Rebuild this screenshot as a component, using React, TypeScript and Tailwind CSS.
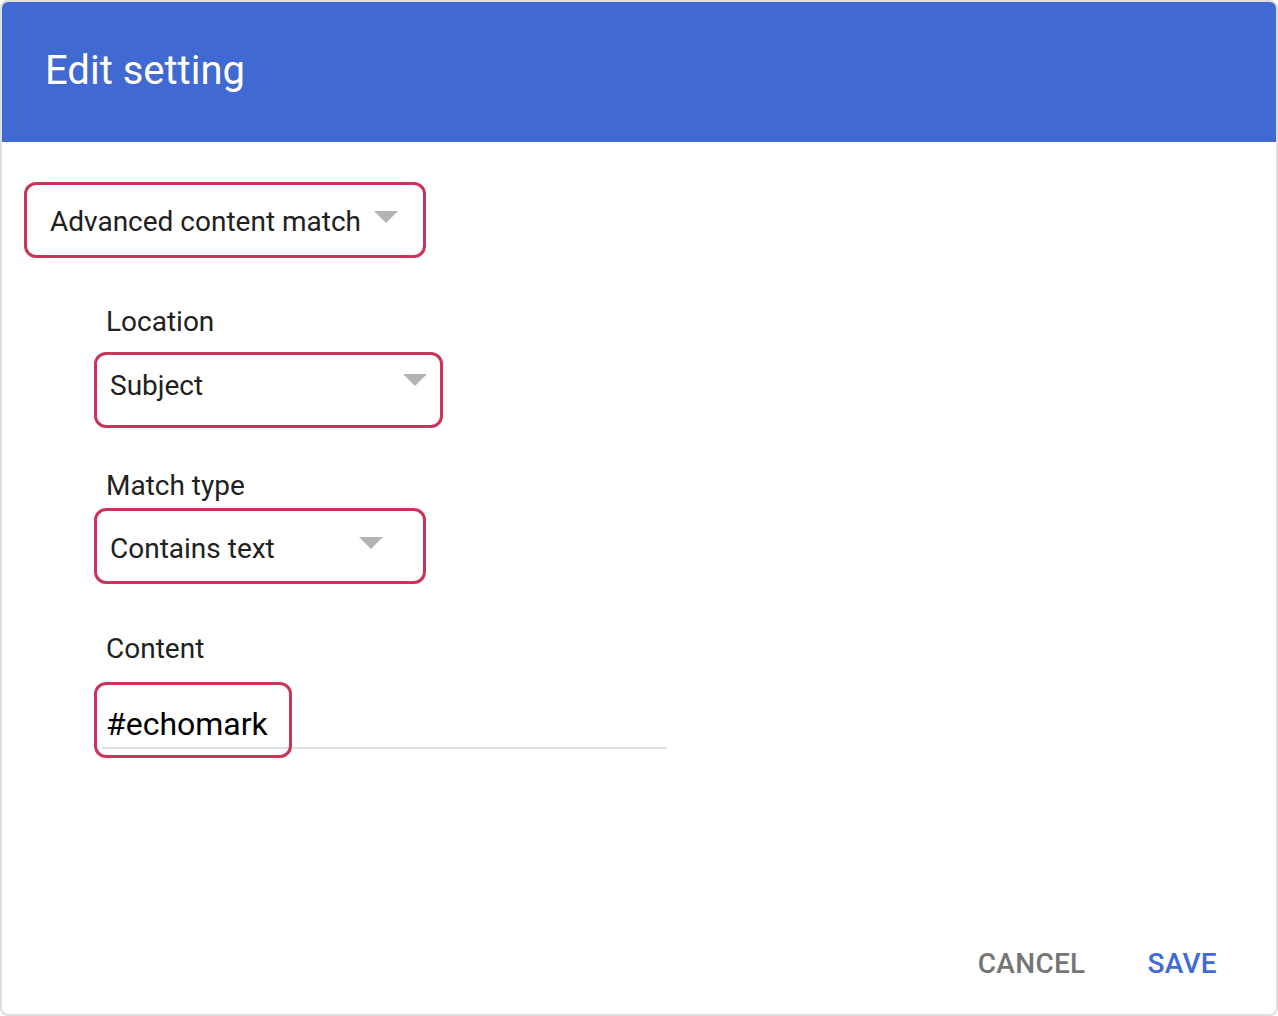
import React from "react";

const font = { fontFamily: "Roboto, 'Noto Sans', Arial, sans-serif" };

function Caret() {
  return (
    <svg width="24" height="12" viewBox="0 0 24 12" className="shrink-0">
      <polygon points="0,0 24,0 12,12" fill="#b3b3b3" />
    </svg>
  );
}

export default function App() {
  return (
    <div
      className="w-[1278px] h-[1016px] border-2 border-[#dedede] rounded-[8px] overflow-hidden flex flex-col bg-white"
      style={font}
    >
      {/* Header */}
      <div className="h-[140px] shrink-0 bg-[#4169d2] pl-[43px] pt-[46px]">
        <h1 className="text-[40px] leading-[46px] text-white font-normal">
          Edit setting
        </h1>
      </div>

      {/* Body */}
      <div className="pl-[22px] pt-[40px]">
        <div className="w-[402px] h-[76px] border-[3px] border-[#cc3358] rounded-[12px] flex items-center pl-[23px] pr-[25px]">
          <span className="text-[28px] leading-[33px] text-[#212121] mt-[3px]">
            Advanced content match
          </span>
          <span className="ml-auto mb-[7px] flex">
            <Caret />
          </span>
        </div>

        <div className="ml-[70px]">
          <div className="mt-[47px] pl-[12px] text-[28px] leading-[33px] text-[#212121]">
            Location
          </div>
          <div className="mt-[14px] w-[349px] h-[76px] border-[3px] border-[#cc3358] rounded-[12px] flex items-center pl-[13px] pr-[13px]">
            <span className="text-[28px] leading-[33px] text-[#212121] mb-[9px]">
              Subject
            </span>
            <span className="ml-auto mb-[21px] flex">
              <Caret />
            </span>
          </div>

          <div className="mt-[41px] pl-[12px] text-[28px] leading-[33px] text-[#212121]">
            Match type
          </div>
          <div className="mt-[6px] w-[332px] h-[76px] border-[3px] border-[#cc3358] rounded-[12px] flex items-center pl-[13px] pr-[40px]">
            <span className="text-[28px] leading-[33px] text-[#212121] mt-[5px]">
              Contains text
            </span>
            <span className="ml-auto mb-[7px] flex">
              <Caret />
            </span>
          </div>

          <div className="mt-[48px] pl-[12px] text-[28px] leading-[33px] text-[#212121]">
            Content
          </div>
          <div className="mt-[17px] relative w-[573px] h-[76px]">
            <div className="absolute left-[8px] right-0 top-[65px] h-[2px] bg-[#e0e0e0]" />
            <div className="relative w-[198px] h-[76px] border-[3px] border-[#cc3358] rounded-[12px] flex items-center pl-[9px]">
              <span className="text-[32px] leading-[38px] text-black mt-[8px]">
                #echomark
              </span>
            </div>
          </div>
        </div>
      </div>

      {/* Footer */}
      <div className="mt-auto flex justify-end items-center gap-[62px] pr-[59px] pb-[34px]">
        <button className="text-[28px] leading-[32px] font-medium tracking-[0.3px] text-[#757575] uppercase">
          Cancel
        </button>
        <button className="text-[28px] leading-[32px] font-medium tracking-[0.3px] text-[#3f6ad8] uppercase">
          Save
        </button>
      </div>
    </div>
  );
}
